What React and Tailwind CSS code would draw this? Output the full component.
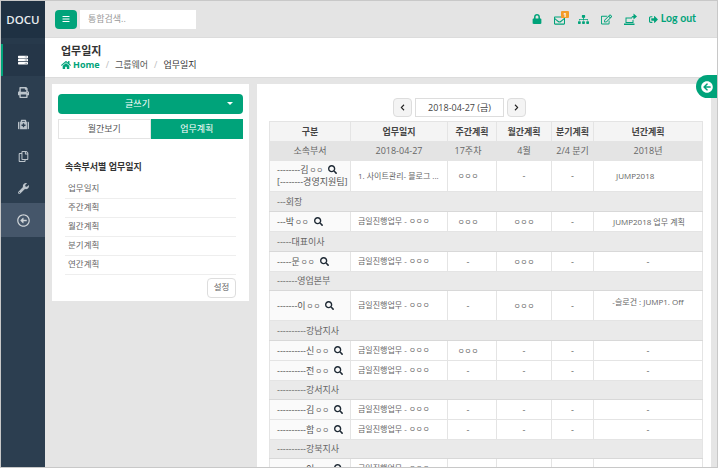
import React from "react";
import {
  FaBars,
  FaServer,
  FaPrint,
  FaMedkit,
  FaRegCopy,
  FaWrench,
  FaRegArrowAltCircleLeft,
  FaArrowCircleLeft,
  FaLock,
  FaRegEnvelope,
  FaSitemap,
  FaRegEdit,
  FaSignOutAlt,
  FaHome,
  FaSearch,
  FaChevronLeft,
  FaChevronRight,
} from "react-icons/fa";

const font = { fontFamily: '"Open Sans", "Noto Sans CJK KR", sans-serif' };

const sideIcons = [FaPrint, FaMedkit, FaRegCopy, FaWrench];

const planLinks = ["업무일지", "주간계획", "월간계획", "분기계획", "연간계획"];

const rows = [
  { h: "h-[31px]", name: "--------김", sub: "[--------경영지원팀]", log: "1. 사이트관리- 블로그 ...", w: "o", m: "-", q: "-", y: "JUMP2018", yClass: "pl-[22px] text-left text-[8px]" },
  { group: "---회장", h: "h-[20px]" },
  { h: "h-[20px]", name: "---박", w: "o", m: "o", q: "-", y: "JUMP2018 업무 계획", yClass: "pl-[19px] text-left text-[8px]" },
  { group: "-----대표이사", h: "h-[20px]" },
  { h: "h-[20px]", name: "-----문", w: "-", m: "o", q: "-", y: "-" },
  { group: "-------영업본부", h: "h-[19px]" },
  { h: "h-[30px]", name: "-------이", w: "-", m: "o", q: "-", y: "-슬로건 : JUMP1. Off", yClass: "pb-2 text-[8px]" },
  { group: "----------강남지사", h: "h-[20px]" },
  { h: "h-[20px]", name: "----------신", w: "o", m: "-", q: "-", y: "-" },
  { h: "h-[20px]", name: "----------전", w: "-", m: "-", q: "-", y: "-" },
  { group: "----------강서지사", h: "h-[19px]" },
  { h: "h-[20px]", name: "----------김", w: "-", m: "-", q: "-", y: "-" },
  { h: "h-[20px]", name: "----------함", w: "-", m: "-", q: "-", y: "-" },
  { group: "----------강북지사", h: "h-[19px]" },
  { h: "h-[20px]", name: "----------이", w: "-", m: "o", q: "-", y: "-" },
];

const cell = "border border-[#e4e4e4] p-0 align-middle";

// masked names in the table are drawn smaller than the text around them
const Masked = ({ n = 3 }) => <span className="text-[7.5px] text-[#666]">{"ㅇ".repeat(n)}</span>;

const Plan = ({ v }) => (v === "o" ? <Masked /> : v);

const LaptopArrow = () => (
  <svg width="13" height="12" viewBox="0 0 13 12" fill="currentColor">
    <path d="M1.5 4.5h6.5v1H2.5v3.5h6V7h1v3h-8z" />
    <path d="M0 10.5h10.5V12H0z" />
    <path d="M7 4.5 8.5 3h1V0.5L13 3.6 9.5 6.5V4.5H9z" />
  </svg>
);

export default function App() {
  return (
    <div className="flex h-[470px] w-[719px] overflow-hidden bg-white" style={font}>
      <div className="flex h-[468px] w-[718px] overflow-hidden border border-[#c8c8c8]">
        {/* Sidebar */}
        <aside className="flex w-[44px] shrink-0 flex-col bg-[#2c3e50]">
          <div className="flex h-[37px] items-center justify-center bg-[#1f3143] text-[11.5px] font-semibold text-[#e8edf0]">
            DOCU
          </div>
          <div className="h-[6px] bg-[#27394b]" />
          <div className="flex h-[32px] items-center justify-center border-l-2 border-[#00a37a] bg-[#253648] pr-[2px] text-white">
            <FaServer size={10} />
          </div>
          {sideIcons.map((Icon, i) => (
            <div key={i} className="flex h-[32px] items-center justify-center text-[#bcc4cb]">
              <Icon size={11} />
            </div>
          ))}
          <div className="-mt-px flex h-[34px] items-center justify-center bg-[#45566a] text-[#cfd4d8]">
            <FaRegArrowAltCircleLeft size={13} />
          </div>
        </aside>

        <div className="relative min-w-0 flex-1 bg-[#e5e5e5]">
          {/* Top bar */}
          <header className="flex h-[37px] items-center border-b border-[#dcdcdc] bg-[#e4e4e4] pl-[10px] pr-[21px]">
            <button className="flex h-[19px] w-[22px] items-center justify-center rounded-sm bg-[#00a37a] text-white">
              <FaBars size={8} />
            </button>
            <div className="ml-[3px] flex h-[19px] w-[116px] items-center bg-white pl-2 text-[9px] text-[#999]">통합검색..</div>
            <div className="ml-auto flex items-center text-[#00a37a]">
              <FaLock size={10} />
              <span className="relative ml-[12px] mt-[3px]">
                <FaRegEnvelope size={11} />
                <span className="absolute -right-[4px] -top-[4px] flex h-[7px] w-[8px] items-center justify-center rounded-[1px] bg-[#f39c28] text-[6px] font-bold leading-none text-white">1</span>
              </span>
              <span className="ml-[13px]"><FaSitemap size={11} /></span>
              <span className="ml-[12px]"><FaRegEdit size={11} /></span>
              <span className="ml-[12px]"><LaptopArrow /></span>
              <span className="ml-[12px]"><FaSignOutAlt size={9} /></span>
              <span className="ml-[3px] font-[Lato] text-[10.5px] font-bold">Log out</span>
            </div>
          </header>

          {/* Page title */}
          <div className="h-[40px] border-b border-[#dcdcdc] bg-white pl-[16px] pt-[5px]">
            <h1 className="text-[11px] leading-[15px] font-semibold text-[#333]">업무일지</h1>
            <div className="flex items-center text-[9px] leading-[13px] text-[#555]">
              <FaHome size={10} className="text-[#00a37a]" />
              <span className="ml-[2px] font-bold text-[#00a37a]">Home</span>
              <span className="mx-[6px] text-[#bbb]">/</span>
              <span>그룹웨어</span>
              <span className="mx-[6px] text-[#bbb]">/</span>
              <span className="text-[#333]">업무일지</span>
            </div>
          </div>

          <div className="flex items-start pl-[7px] pt-[6px]">
            {/* Left panel */}
            <section className="w-[197px] bg-white px-[6px] pt-[10px] pb-[3px] text-[9px]">
              <button className="relative flex h-[20px] w-full items-center justify-center rounded-sm bg-[#00a37a] pr-[26px] text-white">
                글쓰기
                <span className="absolute right-[10px] top-[8px] h-0 w-0 border-x-[3px] border-t-[3px] border-x-transparent border-t-white" />
              </button>
              <div className="mt-[5px] grid h-[20px] grid-cols-2">
                <div className="flex items-center justify-center border border-[#e4e4e4] text-[#555]">월간보기</div>
                <div className="flex items-center justify-center bg-[#00a37a] text-white">업무계획</div>
              </div>
              <h2 className="mt-[21px] pl-[7px] text-[9px] font-bold text-[#333]">속속부서별 업무일지</h2>
              <ul className="mt-[6px] px-[7px] text-[8.5px] text-[#666]">
                {planLinks.map((t) => (
                  <li key={t} className="flex h-[19px] items-center border-b border-[#eee] pl-[3px]">{t}</li>
                ))}
              </ul>
              <div className="mt-[3px] flex justify-end pr-[7px]">
                <button className="h-[20px] w-[29px] rounded-sm border border-[#ddd] text-[8.5px] text-[#666]">설정</button>
              </div>
            </section>

            {/* Right panel */}
            <section className="ml-[8px] h-[400px] w-[454px] bg-white px-[12px] pt-[14px] text-[9px] text-[#666]">
              <div className="ml-[124px] flex h-[23px] items-start">
                <button className="flex h-[19px] w-[19px] items-center justify-center rounded-sm border border-[#ddd] bg-[#f4f4f4] text-[#222]">
                  <FaChevronLeft size={7} />
                </button>
                <div className="mx-[3px] flex h-[19px] w-[89px] items-center justify-center border border-[#ddd] text-[9px] text-[#444]">2018-04-27 (금)</div>
                <button className="flex h-[19px] w-[19px] items-center justify-center rounded-sm border border-[#ddd] bg-[#f4f4f4] text-[#222]">
                  <FaChevronRight size={7} />
                </button>
              </div>
              <table className="w-[433px] table-fixed border-collapse text-center">
                <colgroup>
                  <col className="w-[81px]" />
                  <col className="w-[97px]" />
                  <col className="w-[49px]" />
                  <col className="w-[55px]" />
                  <col className="w-[42px]" />
                  <col className="w-[109px]" />
                </colgroup>
                <thead>
                  <tr className="h-[20px] bg-[#f4f4f4] text-[#444]">
                    {["구분", "업무일지", "주간계획", "월간계획", "분기계획", "년간계획"].map((t) => (
                      <th key={t} className={cell + " font-semibold"}>{t}</th>
                    ))}
                  </tr>
                  <tr className="h-[19px] bg-[#e4e4e4]">
                    {["소속부서", "2018-04-27", "17주차", "4월", "2/4 분기", "2018년"].map((t, i) => (
                      <td key={t} className={cell + " border-[#dcdcdc]" + (i === 2 ? " pr-[8px]" : "")}>{t}</td>
                    ))}
                  </tr>
                </thead>
                <tbody>
                  {rows.map((r, i) =>
                    r.group ? (
                      <tr key={i} className={r.h + " bg-[#eaeaea]"}>
                        <td colSpan={6} className={cell + " pl-[7px] text-left border-b-[#d8d8d8]"}>{r.group}</td>
                      </tr>
                    ) : (
                      <tr key={i} className={r.h}>
                        <td className={cell + " whitespace-nowrap bg-[#fafafa] pl-[7px] text-left leading-[12px] text-[#555]"}>
                          <span>{r.name}</span>
                          <span className="ml-[1px]"><Masked n={2} /></span>
                          <FaSearch size={9} className="ml-[5px] inline align-[-1px] text-[#1f2a35]" />
                          {r.sub && <div>{r.sub}</div>}
                        </td>
                        <td className={cell + " whitespace-nowrap pl-[7px] text-left text-[8px]"}>
                          {r.log || (
                            <>
                              금일진행업무 - <Masked />
                            </>
                          )}
                        </td>
                        <td className={cell + " pr-[8px]"}><Plan v={r.w} /></td>
                        <td className={cell}><Plan v={r.m} /></td>
                        <td className={cell}>{r.q}</td>
                        <td className={cell + " " + (r.yClass || "")}>{r.y}</td>
                      </tr>
                    )
                  )}
                </tbody>
              </table>
            </section>
          </div>

          {/* Collapse tab */}
          <div className="absolute right-0 top-[74px] flex h-[23px] w-[21px] items-center justify-center rounded-l-[12px] bg-[#00a37a] text-white">
            <FaArrowCircleLeft size={12} />
          </div>
        </div>
      </div>
    </div>
  );
}
